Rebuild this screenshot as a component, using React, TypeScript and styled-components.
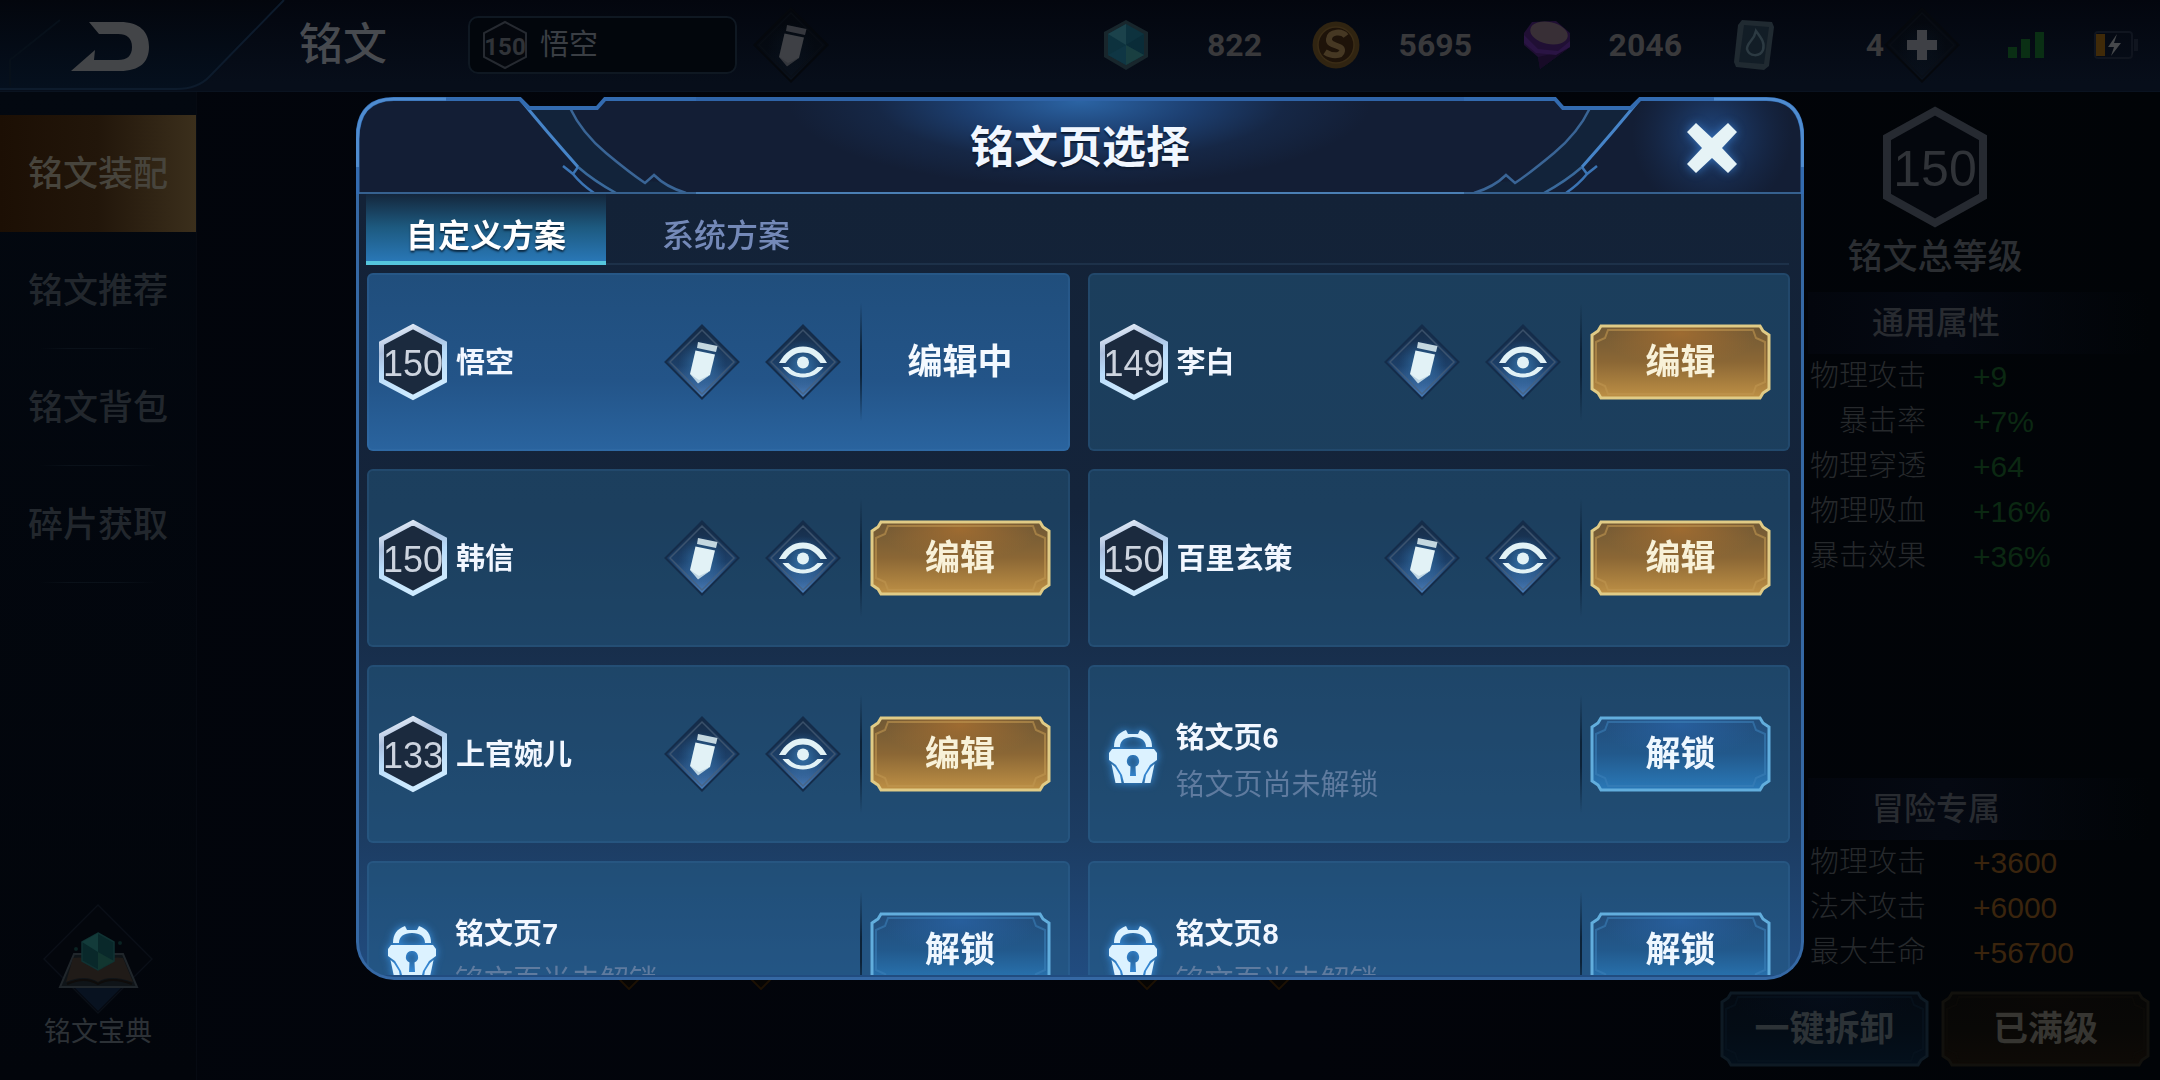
import React, { useId, useState } from "react";
import styled, { createGlobalStyle } from "styled-components";

const GlobalStyle = createGlobalStyle`
  * { box-sizing: border-box; }
  html, body, #root { height: 100%; }
  body {
    margin: 0;
    background: #020409;
    color: #fff;
    font-family: "Liberation Sans", "Noto Sans CJK SC", sans-serif;
    overflow: hidden;
  }
  button, input { font: inherit; color: inherit; }
  button { border: 0; padding: 0; margin: 0; background: none; cursor: pointer; }
  h1, h2, h3, p, ul, dl, dd { margin: 0; padding: 0; }
  ul { list-style: none; }
`;

/* ---------- shell ---------- */

const Shell = styled.div`
  display: flex;
  flex-direction: column;
  height: 100vh;
  background: linear-gradient(90deg, #02050c, #02040a 60%, #010407);
`;

const TopBar = styled.header`
  display: flex;
  align-items: center;
  flex: none;
  height: 92px;
  padding: 0 22px 2px 0;
  background: linear-gradient(#03060e, #070e1a 90%);
  border-bottom: 1px solid #0a1320;
`;

const BackButton = styled.button`
  display: block;
  width: 290px;
  height: 90px;
`;

const PageTitle = styled.h1`
  margin-left: 9px;
  width: 169px;
  font-size: 44px;
  line-height: 60px;
  font-weight: 500;
  color: #474a4f;
`;

const PageName = styled.div`
  display: flex;
  align-items: center;
  gap: 12px;
  width: 269px;
  height: 58px;
  margin-right: 16px;
  padding-left: 12px;
  background: #02060c;
  border: 2px solid #0f1822;
  border-radius: 10px;
`;

const PageNameInput = styled.input`
  width: 180px;
  padding: 0;
  border: 0;
  background: transparent;
  outline: none;
  font-size: 29px;
  line-height: 40px;
  color: #3a3e44;
`;

const IconButton = styled.button`
  display: block;
  flex: none;
  line-height: 0;
`;

const Resources = styled.ul`
  display: flex;
  align-items: center;
  gap: 50px;
  margin-left: auto;
`;

const Resource = styled.li`
  display: flex;
  align-items: center;
  justify-content: space-between;
  width: 160px;
  font-family: Roboto, sans-serif;
  font-weight: 700;
  font-size: 32px;
  line-height: 40px;
  color: #39393b;

  &:last-child { width: 152px; }
`;

const StatusIcons = styled.div`
  display: flex;
  align-items: center;
  gap: 50px;
  margin-left: 48px;
`;

const Columns = styled.div`
  display: flex;
  flex: 1;
  min-height: 0;
`;

const Sidebar = styled.nav`
  display: flex;
  flex-direction: column;
  justify-content: space-between;
  width: 197px;
  padding: 23px 0 30px;
  background: linear-gradient(#030810, #02050b);
  border-right: 1px solid #060a12;
`;

const NavItem = styled.button<{ $active?: boolean }>`
  display: block;
  width: 100%;
  height: 117px;
  font-size: 35px;
  line-height: 48px;
  font-weight: 500;
  color: ${(p) => (p.$active ? "#47443c" : "#22272d")};
  background: ${(p) =>
    p.$active
      ? "linear-gradient(90deg, #1c0f04, #22160a 50%, #3b2f1c)"
      : "linear-gradient(90deg, transparent 20%, #0a1119 35%, #0a1119 60%, transparent 80%) bottom / 100% 1px no-repeat"};
`;

const BookButton = styled.button`
  display: flex;
  flex-direction: column;
  align-items: center;
  font-size: 27px;
  line-height: 36px;
  color: #2c3136;
`;

const Stage = styled.main`
  display: flex;
  flex: 1;
  align-items: flex-end;
  justify-content: center;
  padding: 0 10px 90px 0;
`;

const SlotPair = styled.div`
  display: flex;
  gap: 106px;
  margin: 0 180px;
`;

/* ---------- attributes column ---------- */

const Attributes = styled.aside`
  display: flex;
  flex-direction: column;
  width: 440px;
  padding: 14px 10px 13px 0;
`;

const TotalLevel = styled.div`
  display: flex;
  flex-direction: column;
  align-items: center;
  gap: 4px;
  margin-bottom: 10px;
  font-size: 35px;
  line-height: 50px;
  font-weight: 500;
  color: #2b2e32;
`;

const SectionTitle = styled.h3`
  margin-left: 88px;
  padding-left: 64px;
  font-size: 32px;
  line-height: 62px;
  font-weight: 500;
  color: #282b30;
  background: linear-gradient(90deg, #03060d, #050912 40%, transparent);
`;

const StatList = styled.dl`
  display: grid;
  grid-template-columns: 206px 1fr;
  column-gap: 47px;
  grid-auto-rows: 45px;
  align-items: center;
  font-size: 29px;
  line-height: 45px;
  color: #26292c;
`;

const StatLabel = styled.dt`
  text-align: right;
  font-weight: 300;
`;

const StatValue = styled.dd<{ $tone: "green" | "amber" }>`
  font-size: 30px;
  color: ${(p) => (p.$tone === "green" ? "#0b2812" : "#3a240d")};
`;

const AdventureSection = styled.section`
  margin-top: auto;
`;

const FooterActions = styled.div`
  display: flex;
  gap: 12px;
  margin-top: 16px;
`;

/* ---------- badges and buttons ---------- */

const BadgeBox = styled.span<{ $w: number; $h: number }>`
  display: grid;
  place-items: center;
  flex: none;
  width: ${(p) => p.$w}px;
  height: ${(p) => p.$h}px;
  svg, span { grid-area: 1 / 1; }
`;

const BadgeNumber = styled.span<{ $size: number; $color: string; $bold?: boolean }>`
  padding-top: 4px;
  font-family: ${(p) => (p.$bold ? "Roboto" : '"Liberation Sans"')}, sans-serif;
  font-size: ${(p) => p.$size}px;
  font-weight: ${(p) => (p.$bold ? 700 : 400)};
  line-height: ${(p) => p.$size}px;
  color: ${(p) => p.$color};
`;

type BadgeProps = {
  value: number;
  w: number;
  h: number;
  size: number;
  stroke: number;
  dim?: boolean;
  bold?: boolean;
};

function HexBadge({ value, w, h, size, stroke, dim, bold }: BadgeProps) {
  const id = useId();
  const s = stroke / 2 + 1;
  const q = h * 0.26;
  const d = `M${w / 2} ${s} L${w - s} ${q} V${h - q} L${w / 2} ${h - s} L${s} ${h - q} V${q} Z`;
  return (
    <BadgeBox $w={w} $h={h}>
      <svg width={w} height={h} aria-hidden="true">
        <defs>
          <linearGradient id={id} x1="0" y1="0" x2="0.3" y2="1">
            <stop offset="0" stopColor="#f4f9ff" />
            <stop offset="0.35" stopColor="#a9bedd" />
            <stop offset="0.6" stopColor="#b9dcfa" />
            <stop offset="1" stopColor="#cdeaff" />
          </linearGradient>
        </defs>
        <path d={d} fill={dim ? "#04070d" : "#1b2a3e"} stroke={dim ? "#262a31" : `url(#${id})`} strokeWidth={stroke} />
      </svg>
      <BadgeNumber $size={size} $bold={bold} $color={dim ? "#303338" : "#cdd4df"}>
        {value}
      </BadgeNumber>
    </BadgeBox>
  );
}

type Tone = "gold" | "blue" | "dimBlue" | "dimGold";

const tones: Record<Tone, { edge: string; inner: string; top: string; mid: string; bottom: string; glow: string; text: string }> = {
  gold: { edge: "#e0cb86", inner: "#bf9650", top: "#6f5835", mid: "#8b6735", bottom: "#be9045", glow: "#a86f30", text: "#f8f1d8" },
  blue: { edge: "#62aedd", inner: "#3a7fb8", top: "#234d7a", mid: "#22598c", bottom: "#2a79b8", glow: "#2862a4", text: "#eef7ff" },
  dimBlue: { edge: "#0e1a24", inner: "#081420", top: "#040a12", mid: "#040c15", bottom: "#04101c", glow: "#050d1a", text: "#2c3236" },
  dimGold: { edge: "#12110d", inner: "#0e0c09", top: "#070706", mid: "#090806", bottom: "#0e0a06", glow: "#0a0806", text: "#363531" },
};

const PlateRoot = styled.button<{ $w: number; $color: string }>`
  display: grid;
  place-items: center;
  flex: none;
  width: ${(p) => p.$w}px;
  height: 76px;
  font-size: 35px;
  line-height: 48px;
  font-weight: 700;
  color: ${(p) => p.$color};
  svg, span { grid-area: 1 / 1; }
`;

function platePath(w: number, h: number, o: number, c: number) {
  const r = w - o;
  const b = h - o;
  return `M${o + c} ${o} H${r - c} L${r - c + 3} ${o + c - 4} L${r} ${o + c} V${b - c} L${r - c + 3} ${b - c + 4} L${r - c} ${b} H${o + c} L${o + c - 3} ${b - c + 4} L${o} ${b - c} V${o + c} L${o + c - 3} ${o + c - 4} Z`;
}

function PlateButton({ tone, width = 181, children }: { tone: Tone; width?: number; children: React.ReactNode }) {
  const id = useId();
  const t = tones[tone];
  return (
    <PlateRoot type="button" $w={width} $color={t.text}>
      <svg width={width} height="76" aria-hidden="true">
        <defs>
          <linearGradient id={id} x1="0" y1="0" x2="0" y2="1">
            <stop offset="0" stopColor={t.top} />
            <stop offset="0.5" stopColor={t.mid} />
            <stop offset="1" stopColor={t.bottom} />
          </linearGradient>
          <radialGradient id={`${id}g`} cx="0.5" cy="0.1" r="0.45">
            <stop offset="0" stopColor={t.glow} stopOpacity="0.8" />
            <stop offset="1" stopColor={t.glow} stopOpacity="0" />
          </radialGradient>
        </defs>
        <path d={platePath(width, 76, 2, 9)} fill={`url(#${id})`} />
        <path d={platePath(width, 76, 2, 9)} fill={`url(#${id}g)`} />
        <path d={platePath(width, 76, 6, 12)} fill="none" stroke={t.inner} strokeWidth="2" opacity="0.6" />
        <path d={platePath(width, 76, 2, 9)} fill="none" stroke={t.edge} strokeWidth="3" />
      </svg>
      <span>{children}</span>
    </PlateRoot>
  );
}

/* ---------- icons ---------- */

function Diamond({ kind, dim }: { kind: "pencil" | "eye" | "plus"; dim?: boolean }) {
  const id = useId();
  const ink = dim ? "#3e4045" : "#e2f2f6";
  return (
    <svg width="76" height="76" viewBox="0 0 76 76" aria-hidden="true">
      <defs>
        <linearGradient id={id} x1="0" y1="0" x2="0" y2="1">
          <stop offset="0" stopColor={dim ? "#04070d" : "#162b45"} />
          <stop offset="0.55" stopColor={dim ? "#050a12" : "#1c3f68"} />
          <stop offset="1" stopColor={dim ? "#0a121e" : "#4a7fbd"} />
        </linearGradient>
        <radialGradient id={`${id}g`}>
          <stop offset="0" stopColor={dim ? "#0a1420" : "#4b9ad6"} stopOpacity="0.6" />
          <stop offset="1" stopColor={dim ? "#0a1420" : "#2f74b4"} stopOpacity="0" />
        </radialGradient>
      </defs>
      <path d="M38 1.500 74.500 38 38 74.500 1.500 38Z" fill={`url(#${id})`} stroke={dim ? "#05080d" : "#142c4a"} strokeWidth="2" />
      <path d="M38 6 70 38 38 70 6 38Z" fill="none" stroke={dim ? "#0a0e15" : "#4a5f78"} strokeWidth="1.500" opacity="0.7" />
      <circle cx="38" cy="40" r="24" fill={`url(#${id}g)`} />
      {kind === "pencil" && (
        <g fill={ink}>
          <path d="M34 18 53.500 22 52 28 33 24Z" opacity="0.85" />
          <path d="M31.500 26.500 51 30.500 46 51 35 56 26 50Z" />
          <path d="M26 50 34 59.500 46 51 36 54Z" opacity="0.8" />
        </g>
      )}
      {kind === "eye" && (
        <g fill={ink}>
          <path d="M14 39C20 28 28 22.500 38 22.500S56 28 62 39H55.500C50 31.500 45 28.500 38 28.500S26 31.500 20.500 39Z" />
          <path d="M17.500 43C23 50 29.500 53.500 38 53.500S53 50 58.500 43H52.500C48 47.500 44 49.500 38 49.500S28 47.500 23.500 43Z" />
          <circle cx="38" cy="38.500" r="6" />
        </g>
      )}
      {kind === "plus" && <path d="M33 23H43V33H53V43H43V53H33V43H23V33H33Z" fill={ink} />}
    </svg>
  );
}

const LockSvg = styled.svg`
  flex: none;
  overflow: visible;
  filter: drop-shadow(0 0 4px #3c9af0);
`;

function LockIcon() {
  return (
    <LockSvg width="48" height="56" viewBox="0 0 48 56" aria-hidden="true">
      <g fill="#dcf2ff">
        <path d="M5 18C5 9 9 4 17 1L19 5H29L31 1C39 4 43 9 43 18H37C37 11.500 32 8 24 8S11 11.500 11 18Z" />
        <path
          fillRule="evenodd"
          d="M3 20H45L48 24V31L41 36 35 46 33 54H15L13 46 7 36 0 31V24ZM24 26A6 6 0 0 0 21.500 37.500L21 47H27L26.500 37.500A6 6 0 0 0 24 26Z"
        />
        <path d="M2.500 35 6 38 11 46 12.500 54H6.500Z" />
        <path d="M45.500 35 42 38 37 46 35.500 54H41.500Z" />
      </g>
    </LockSvg>
  );
}

function BackShape() {
  return (
    <svg width="290" height="90" viewBox="0 0 290 90" aria-hidden="true">
      <defs>
        <linearGradient id="backFill" x1="0" y1="0" x2="0" y2="1">
          <stop offset="0" stopColor="#03060d" />
          <stop offset="1" stopColor="#05101e" />
        </linearGradient>
      </defs>
      <path d="M0 0H284L210 76Q198 89 176 89H0Z" fill="url(#backFill)" />
      <path d="M284 0 210 76Q198 89 176 89H0" fill="none" stroke="#0d1b2c" strokeWidth="2" />
      <path d="M60 20 10 60V86" fill="none" stroke="#07101a" strokeWidth="2" />
      <path
        d="M89 22H120C140 22 149 32 149 47S140 71 120 71H71L95 50 94 60H118C127 60 132 56 132 47S127 34 118 34H99Z"
        fill="#434548"
      />
    </svg>
  );
}

function GemIcon() {
  return (
    <svg width="48" height="52" viewBox="0 0 48 52" aria-hidden="true">
      <path d="M24 1 46 13V38L24 51 2 38V13Z" fill="#18262c" />
      <path d="M24 5 42 15V36L24 46 6 36V15Z" fill="#0d323e" />
      <path d="M24 26 6 15 24 5Z" fill="#1b424b" />
      <path d="M24 26 42 15V36Z" fill="#0a2c38" />
      <path d="M24 26V46L6 36Z" fill="#0f3644" />
      <path d="M24 26 42 36 24 46Z" fill="#193f41" />
    </svg>
  );
}

function CoinIcon() {
  return (
    <svg width="48" height="52" viewBox="0 0 48 52" aria-hidden="true">
      <circle cx="24" cy="26" r="23.500" fill="#302411" />
      <circle cx="24" cy="26" r="18" fill="#1e1309" stroke="#3a2c16" strokeWidth="1.500" />
      <path
        d="M34 17C30 12 18 12 17 20C16 28 31 25 30 32C29 38 19 37 13 33"
        fill="none"
        stroke="#463823"
        strokeWidth="6"
      />
    </svg>
  );
}

function ShardIcon() {
  return (
    <svg width="50" height="52" viewBox="0 0 50 52" aria-hidden="true">
      <path d="M2 14 10 3 34 2 48 14V28L18 50 16 38 2 26Z" fill="#200f34" />
      <path d="M16 38 34 34 48 28 18 50Z" fill="#170b27" />
      <path d="M2 16 16 30 36 32 48 22V28L34 36 14 34 2 24Z" fill="#2a1444" />
      <ellipse cx="27" cy="14" rx="19" ry="11" transform="rotate(12 27 14)" fill="#382f36" />
    </svg>
  );
}

function CardIcon() {
  return (
    <svg width="44" height="52" viewBox="0 0 44 52" aria-hidden="true">
      <path d="M10 1 40 3 42 8 37 47 32 51 4 48 2 43 6 6Z" fill="#202a31" />
      <path d="M12 6 37 8 32 45 7 43Z" fill="#121d26" />
      <path d="M24 12C30 20 33 24 31 31C28 38 17 38 15 30C15 23 22 22 24 12Z" fill="none" stroke="#2c3a42" strokeWidth="2.500" />
    </svg>
  );
}

function SignalIcon() {
  return (
    <svg width="36" height="28" viewBox="0 0 36 28" aria-hidden="true" fill="#0a2f14">
      <rect x="0" y="16" width="9" height="11" />
      <rect x="13" y="8" width="9" height="19" />
      <rect x="27" y="1" width="9" height="26" />
    </svg>
  );
}

function BatteryIcon() {
  return (
    <svg width="44" height="28" viewBox="0 0 44 28" aria-hidden="true">
      <rect x="1" y="1" width="37" height="26" rx="3" fill="none" stroke="#10151f" strokeWidth="2" />
      <rect x="40" y="8" width="4" height="12" fill="#10151f" />
      <rect x="2" y="3" width="9" height="22" fill="#402a08" />
      <path d="M23 3 14 16H20L17 25 27 12H20Z" fill="#46484b" />
    </svg>
  );
}

function BookIcon() {
  return (
    <svg width="110" height="110" viewBox="0 0 110 110" aria-hidden="true">
      <path d="M55 1 109 55 55 109 1 55Z" fill="#03060c" stroke="#0a0f17" strokeWidth="1.500" />
      <path d="M30 82H80L55 107Z" fill="#081220" />
      <path d="M31 50H80L94 83H17Z" fill="#0f1418" stroke="#20262b" strokeWidth="2" />
      <path d="M30 54Q45 52 55 60Q66 52 80 54L90 78Q66 70 55 78Q42 70 23 78Z" fill="#201b18" />
      <path d="M24 80Q42 72 55 80Q68 72 89 80" fill="none" stroke="#0e0c0b" strokeWidth="2" />
      <path d="M55 29 71 38V57L55 66 39 57V38Z" fill="#09282a" stroke="#103233" strokeWidth="1.500" />
      <path d="M55 48 39 38 55 29Z" fill="#133b3a" />
      <path d="M55 48 71 57 55 66Z" fill="#123630" />
      <circle cx="33" cy="45" r="2" fill="#0a2222" />
      <circle cx="77" cy="39" r="2" fill="#0a2222" />
    </svg>
  );
}

function SlotGlyph() {
  return (
    <svg width="26" height="26" viewBox="0 0 26 26" aria-hidden="true">
      <path d="M13 3 24 14 13 25 2 14Z" fill="#060504" stroke="#1c1104" strokeWidth="2" />
    </svg>
  );
}

/* ---------- dialog ---------- */

const Overlay = styled.div`
  position: fixed;
  inset: 0;
  display: flex;
  justify-content: center;
  padding: 97px 24px 100px;
`;

const Dialog = styled.section`
  display: flex;
  flex-direction: column;
  width: calc(100% - 664px);
  min-width: 1280px;
`;

const DialogHeader = styled.header`
  display: grid;
  grid-template-columns: 340px 1fr 340px;
  flex: none;
  height: 97px;
`;

const HeaderCorner = styled.div`
  position: relative;
  display: flex;
  align-items: center;
  justify-content: flex-end;
  padding-right: 60px;
`;

const CornerArt = styled.svg<{ $flip?: boolean }>`
  position: absolute;
  inset: 0;
  transform: ${(p) => (p.$flip ? "scaleX(-1)" : "none")};
`;

const HeaderCenter = styled.div`
  display: grid;
  place-items: center;
  padding-top: 2px;
  border-top: 4px solid #2f64a8;
  border-bottom: 2px solid #4a7fb4;
  background: radial-gradient(ellipse 38% 95% at 50% 0, #2b64a4, #1f477fcc 40%, #1a355f66 70%, transparent 100%), #131e35;
`;

const DialogTitle = styled.h2`
  font-size: 44px;
  line-height: 60px;
  font-weight: 700;
  color: #f1f7ff;
  text-shadow: 0 2px 2px #0b1a30;
`;

const CloseButton = styled.button`
  position: relative;
  display: grid;
  place-items: center;
  width: 64px;
  height: 64px;
  margin-top: 4px;
  svg { overflow: visible; filter: drop-shadow(0 0 5px #3570b8); }
`;

const DialogBody = styled.div`
  display: flex;
  flex-direction: column;
  flex: 1;
  min-height: 0;
  padding-bottom: 2px;
  border: 3px solid #3568a4;
  border-top: 0;
  border-radius: 0 0 38px 38px;
  background: linear-gradient(#132237, #14243b 40%, #1c3c62 82%, #214c80);
  overflow: hidden;
`;

const Tabs = styled.div`
  display: flex;
  flex: none;
  height: 71px;
  margin: 0 12px 8px 7px;
  border-bottom: 2px solid #1d3149;
`;

const Tab = styled.button<{ $active: boolean }>`
  width: 240px;
  height: 71px;
  padding-top: 16px;
  font-size: 32px;
  line-height: 44px;
  font-weight: ${(p) => (p.$active ? 700 : 500)};
  color: ${(p) => (p.$active ? "#ffffff" : "#7489b8")};
  background: ${(p) => (p.$active ? "linear-gradient(#14263b, #1d5a80 50%, #2977b6)" : "none")};
  border-bottom: 4px solid ${(p) => (p.$active ? "#55c6dd" : "transparent")};
  text-shadow: ${(p) => (p.$active ? "0 2px 2px #0b2a44" : "none")};
`;

const PageList = styled.ul`
  display: grid;
  grid-template-columns: 1fr 1fr;
  grid-auto-rows: 178px;
  gap: 18px;
  flex: 1;
  min-height: 0;
  padding: 0 11px 0 8px;
  overflow-y: auto;
  scrollbar-width: none;
`;

const PageCard = styled.li<{ $selected?: boolean }>`
  display: flex;
  align-items: center;
  padding: 0 19px 0 11px;
  border-radius: 6px;
  background: ${(p) => (p.$selected ? "linear-gradient(#204e7c, #235488 60%, #2a649f)" : "rgba(38, 98, 140, 0.44)")};
  box-shadow: inset 0 0 0 2px rgba(80, 145, 195, 0.14);
`;

const CardName = styled.strong`
  flex: 1;
  margin-left: 8px;
  padding-top: 2px;
  font-size: 29px;
  line-height: 40px;
  font-weight: 700;
  color: #f2f7ff;
`;

const CardTools = styled.div`
  display: flex;
  gap: 25px;
  margin-right: 19px;
`;

const Divider = styled.span`
  width: 2px;
  height: 118px;
  margin-right: 8px;
  background: linear-gradient(transparent, #0c2238 40%, #0c2238 60%, transparent);
`;

const EditingLabel = styled.span`
  width: 181px;
  font-size: 35px;
  line-height: 48px;
  font-weight: 700;
  text-align: center;
  color: #f4f9ff;
`;

const LockedText = styled.div`
  flex: 1;
  margin-left: 19px;
  padding-top: 16px;
  font-size: 29px;
  line-height: 47px;
  font-weight: 700;
  color: #f2f7ff;
`;

const LockedHint = styled.p`
  font-weight: 400;
  color: #5f7b9f;
`;

const LockSlot = styled.span`
  display: grid;
  place-items: center;
  width: 48px;
  height: 56px;
  margin: 6px 0 0 10px;
`;

function HeaderArt({ flip, glow }: { flip?: boolean; glow?: boolean }) {
  const id = useId();
  return (
    <CornerArt $flip={flip} width="340" height="97" viewBox="0 0 340 97" aria-hidden="true">
      <defs>
        <radialGradient id={id} cx="92" cy="38" r="80" gradientUnits="userSpaceOnUse">
          <stop offset="0" stopColor="#23508f" stopOpacity="0.8" />
          <stop offset="1" stopColor="#1a3562" stopOpacity="0" />
        </radialGradient>
      </defs>
      <path d="M2 97V42Q2 2 38 2H164L173 11H241L249 2H340V97Z" fill="#131e35" />
      <path d="M166 2 222 70 260 96H328Q300 80 289 86 Q240 52 214 11H173Z" fill="#12233a" />
      {glow && <rect x="12" y="3" width="160" height="92" fill={`url(#${id})`} />}
      <g fill="none" strokeWidth="2.500" stroke="#3b74b4">
        <path d="M222 70Q238 84 260 96" stroke="#3a6a9c" />
        <path d="M207 69 217 77Q225 87 238 96M217 77 222 70" />
        <path d="M214 11Q226 36 250 56T289 86L298 78Q310 90 330 96" stroke="#3a6596" />
      </g>
      <path d="M0 96H340" stroke="#36618f" strokeWidth="2" />
      <path d="M164 2Q190 34 222 70" fill="none" stroke="#4684c8" strokeWidth="3" />
      <path d="M1.500 97V42Q1.500 2 38 2H164L173 11H241L249 2H340" fill="none" stroke="#336bb0" strokeWidth="4" />
      <path d="M1.500 70V42Q1.500 2 38 2H90" fill="none" stroke="#4f8cd0" strokeWidth="3" />
    </CornerArt>
  );
}

type RunePage = { name: string; level?: number; editing?: boolean };

const pages: RunePage[] = [
  { name: "悟空", level: 150, editing: true },
  { name: "李白", level: 149 },
  { name: "韩信", level: 150 },
  { name: "百里玄策", level: 150 },
  { name: "上官婉儿", level: 133 },
  { name: "铭文页6" },
  { name: "铭文页7" },
  { name: "铭文页8" },
];

function PageRow({ page }: { page: RunePage }) {
  if (page.level === undefined) {
    return (
      <PageCard>
        <LockSlot>
          <LockIcon />
        </LockSlot>
        <LockedText>
          {page.name}
          <LockedHint>铭文页尚未解锁</LockedHint>
        </LockedText>
        <Divider />
        <PlateButton tone="blue">解锁</PlateButton>
      </PageCard>
    );
  }
  return (
    <PageCard $selected={page.editing}>
      <HexBadge value={page.level} w={70} h={78} size={36} stroke={5} />
      <CardName>{page.name}</CardName>
      <CardTools>
        <IconButton type="button" aria-label="重命名">
          <Diamond kind="pencil" />
        </IconButton>
        <IconButton type="button" aria-label="查看">
          <Diamond kind="eye" />
        </IconButton>
      </CardTools>
      <Divider />
      {page.editing ? <EditingLabel>编辑中</EditingLabel> : <PlateButton tone="gold">编辑</PlateButton>}
    </PageCard>
  );
}

const navItems = ["铭文装配", "铭文推荐", "铭文背包", "碎片获取"];
const tabs = ["自定义方案", "系统方案"];
const commonStats = [
  ["物理攻击", "+9"],
  ["暴击率", "+7%"],
  ["物理穿透", "+64"],
  ["物理吸血", "+16%"],
  ["暴击效果", "+36%"],
];
const adventureStats = [
  ["物理攻击", "+3600"],
  ["法术攻击", "+6000"],
  ["最大生命", "+56700"],
];

function Stats({ rows, tone }: { rows: string[][]; tone: "green" | "amber" }) {
  return (
    <StatList>
      {rows.map(([label, value]) => (
        <React.Fragment key={label}>
          <StatLabel>{label}</StatLabel>
          <StatValue $tone={tone}>{value}</StatValue>
        </React.Fragment>
      ))}
    </StatList>
  );
}

export default function App() {
  const [tab, setTab] = useState(0);
  return (
    <>
      <GlobalStyle />
      <Shell>
        <TopBar>
          <BackButton type="button" aria-label="返回">
            <BackShape />
          </BackButton>
          <PageTitle>铭文</PageTitle>
          <PageName>
            <HexBadge value={150} w={46} h={50} size={24} stroke={2} dim bold />
            <PageNameInput aria-label="铭文页名称" defaultValue="悟空" />
          </PageName>
          <IconButton type="button" aria-label="重命名">
            <Diamond kind="pencil" dim />
          </IconButton>
          <Resources>
            <Resource><GemIcon />822</Resource>
            <Resource><CoinIcon />5695</Resource>
            <Resource><ShardIcon />2046</Resource>
            <Resource><CardIcon />4</Resource>
          </Resources>
          <IconButton type="button" aria-label="添加">
            <Diamond kind="plus" dim />
          </IconButton>
          <StatusIcons>
            <SignalIcon />
            <BatteryIcon />
          </StatusIcons>
        </TopBar>
        <Columns>
          <Sidebar>
            <div>
              {navItems.map((item, i) => (
                <NavItem key={item} type="button" $active={i === 0}>
                  {item}
                </NavItem>
              ))}
            </div>
            <BookButton type="button">
              <BookIcon />
              铭文宝典
            </BookButton>
          </Sidebar>
          <Stage>
            <SlotPair><SlotGlyph /><SlotGlyph /></SlotPair>
            <SlotPair><SlotGlyph /><SlotGlyph /></SlotPair>
          </Stage>
          <Attributes>
            <TotalLevel>
              <HexBadge value={150} w={106} h={122} size={50} stroke={8} dim />
              铭文总等级
            </TotalLevel>
            <SectionTitle>通用属性</SectionTitle>
            <Stats rows={commonStats} tone="green" />
            <AdventureSection>
              <SectionTitle>冒险专属</SectionTitle>
              <Stats rows={adventureStats} tone="amber" />
            </AdventureSection>
            <FooterActions>
              <PlateButton tone="dimBlue" width={209}>一键拆卸</PlateButton>
              <PlateButton tone="dimGold" width={209}>已满级</PlateButton>
            </FooterActions>
          </Attributes>
        </Columns>
      </Shell>
      <Overlay>
        <Dialog role="dialog" aria-modal="true" aria-labelledby="dialog-title">
          <DialogHeader>
            <HeaderCorner>
              <HeaderArt />
            </HeaderCorner>
            <HeaderCenter>
              <DialogTitle id="dialog-title">铭文页选择</DialogTitle>
            </HeaderCenter>
            <HeaderCorner>
              <HeaderArt flip glow />
              <CloseButton type="button" aria-label="关闭">
                <svg width="52" height="52" viewBox="0 0 52 52" aria-hidden="true">
                  <path d="M10 1 26 16 42 1 51 10 36 26 51 42 42 51 26 36 10 51 1 42 16 26 1 10Z" fill="#e6f3f6" />
                </svg>
              </CloseButton>
            </HeaderCorner>
          </DialogHeader>
          <DialogBody>
            <Tabs role="tablist">
              {tabs.map((label, i) => (
                <Tab key={label} type="button" role="tab" aria-selected={tab === i} $active={tab === i} onClick={() => setTab(i)}>
                  {label}
                </Tab>
              ))}
            </Tabs>
            <PageList>
              {pages.map((page) => (
                <PageRow key={page.name} page={page} />
              ))}
            </PageList>
          </DialogBody>
        </Dialog>
      </Overlay>
    </>
  );
}
